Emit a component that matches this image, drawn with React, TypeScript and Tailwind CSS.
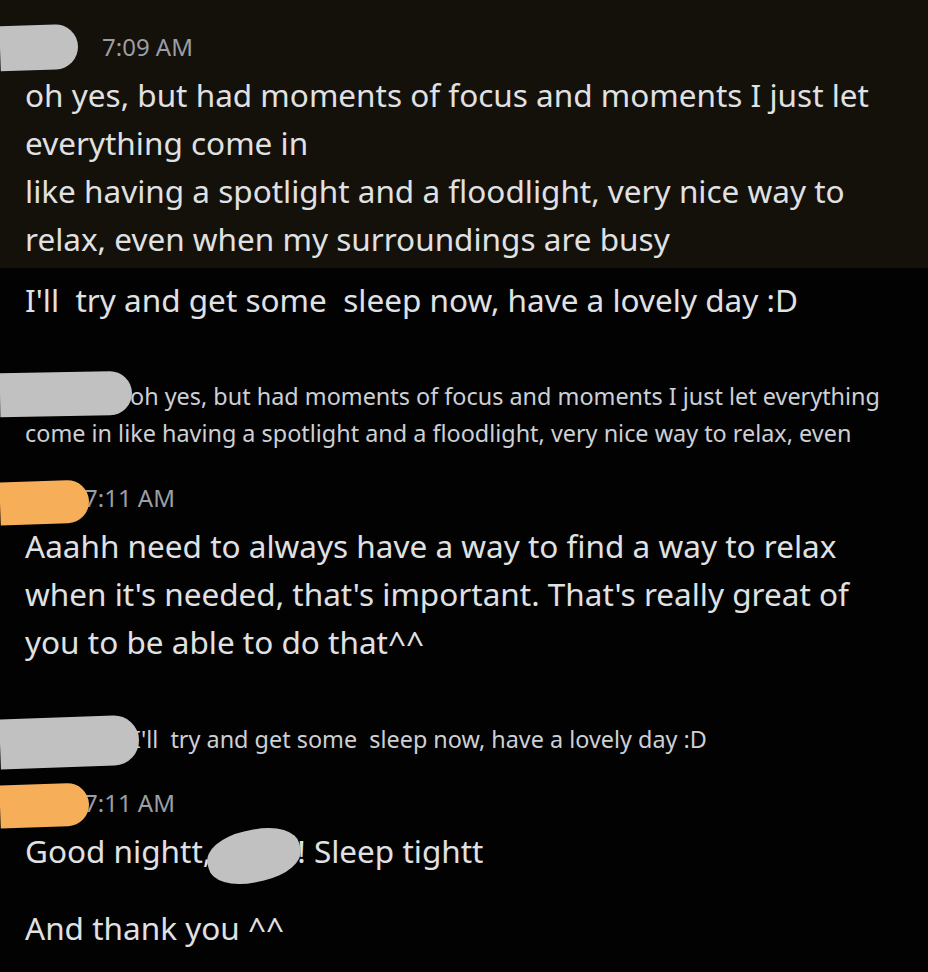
import React from "react";

const GrayBlob = ({ className }: { className: string }) => (
  <div className={`absolute bg-[#c1c1c1] ${className}`} />
);

export default function App() {
  return (
    <div
      className="w-[928px] h-[972px] overflow-hidden bg-[#020203] text-[#e0e1e3]"
      style={{ fontFamily: '"Noto Sans", "Open Sans", sans-serif' }}
    >
      {/* highlighted message */}
      <div className="bg-[#14100a] pt-[29px] pb-[5px]">
        <div className="relative h-[36px] leading-[36px]">
          <GrayBlob className="left-0 top-[-4px] w-[78px] h-[45px] rounded-r-[40px] rounded-l-none -rotate-2" />
          <span className="pl-[102px] text-[24px] text-[#9a9ea5]">7:09 AM</span>
        </div>
        <div className="mt-[6px] pl-[25px] text-[31.5px] leading-[48px] whitespace-nowrap">
          <div>oh yes, but had moments of focus and moments I just let</div>
          <div>everything come in</div>
          <div>like having a spotlight and a floodlight, very nice way to</div>
          <div>relax, even when my surroundings are busy</div>
        </div>
      </div>

      <div className="pt-[8px] pl-[25px] text-[31.5px] leading-[48px] whitespace-nowrap">
        I'll&nbsp; try and get some&nbsp; sleep now, have a lovely day :D
      </div>

      {/* reply preview */}
      <div className="relative mt-[54px] pl-[25px] text-[23.4px] leading-[37px] text-[#cdd0d4] whitespace-nowrap">
        <GrayBlob className="left-0 top-[-6px] w-[132px] h-[44px] rounded-r-[30px] -rotate-1" />
        <div className="pl-[105px]">oh yes, but had moments of focus and moments I just let everything</div>
        <div>come in like having a spotlight and a floodlight, very nice way to relax, even</div>
      </div>

      <div className="relative mt-[28px] h-[36px] leading-[36px]">
        <div className="absolute left-0 top-[1px] w-[89px] h-[43px] bg-[#f6ae58] rounded-r-[30px] -rotate-2" />
        <span className="pl-[84px] text-[24px] text-[#9a9ea5]">7:11 AM</span>
      </div>
      <div className="mt-[6px] pl-[25px] text-[31.5px] leading-[48px] whitespace-nowrap">
        <div>Aaahh need to always have a way to find a way to relax</div>
        <div>when it's needed, that's important. That's really great of</div>
        <div>you to be able to do that^^</div>
      </div>

      {/* reply preview */}
      <div className="relative mt-[55px] pl-[25px] text-[23.4px] leading-[37px] text-[#cdd0d4] whitespace-nowrap">
        <GrayBlob className="left-0 top-[-4px] w-[139px] h-[50px] rounded-r-[30px] -rotate-2" />
        <div className="pl-[108px]">I'll&nbsp; try and get some&nbsp; sleep now, have a lovely day :D</div>
      </div>

      <div className="relative mt-[27px] h-[36px] leading-[36px]">
        <div className="absolute left-0 top-[-1px] w-[89px] h-[43px] bg-[#f6ae58] rounded-r-[30px] -rotate-2" />
        <span className="pl-[84px] text-[24px] text-[#9a9ea5]">7:11 AM</span>
      </div>
      <div className="mt-[6px] pl-[25px] text-[31.5px] leading-[48px] whitespace-nowrap">
        Good nightt,
        <span className="relative inline-block w-[86px] align-middle">
          <span className="absolute left-[-4px] top-[-1px] w-[94px] h-[52px] bg-[#c1c1c1] rounded-[45%] -rotate-12" />
          &nbsp;
        </span>
        ! Sleep tightt
      </div>
      <div className="mt-[25px] pl-[25px] text-[31.5px] leading-[48px] whitespace-nowrap">
        And thank you ^^
      </div>
    </div>
  );
}
